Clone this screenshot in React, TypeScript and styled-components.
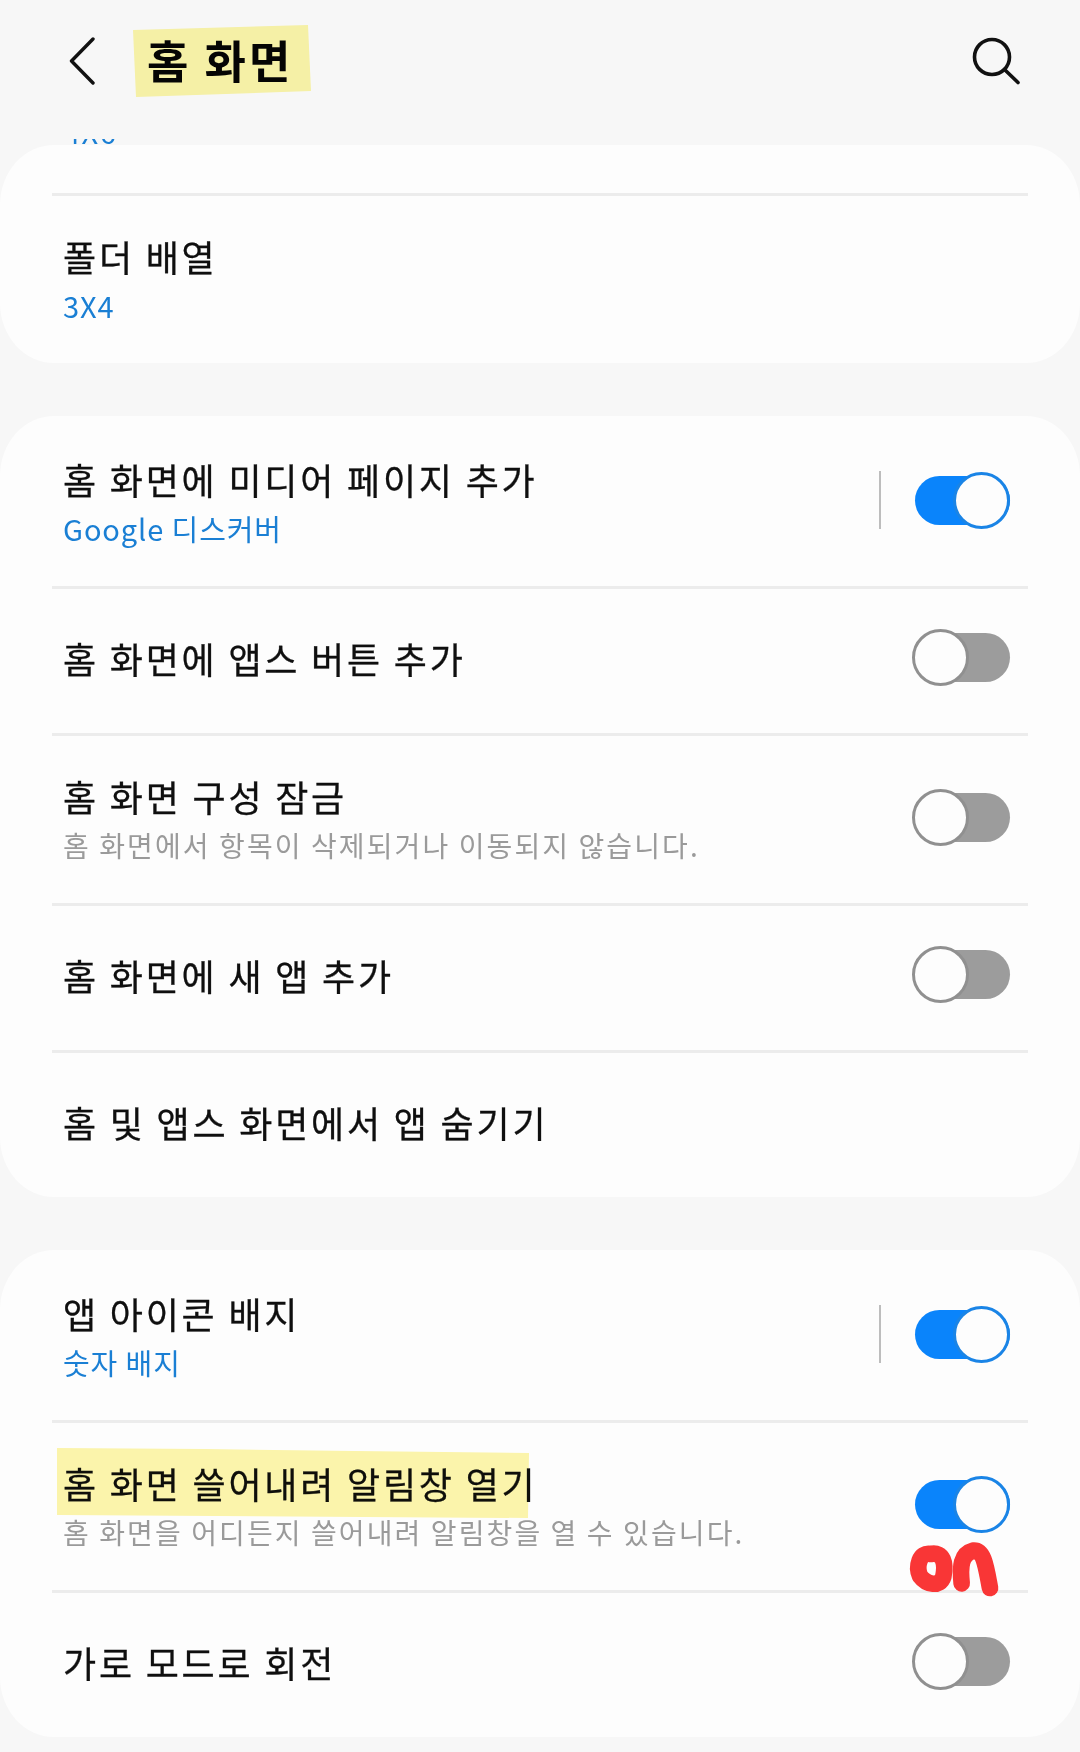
import React from "react";
import styled, { createGlobalStyle } from "styled-components";

const Global = createGlobalStyle`
  html, body { margin: 0; padding: 0; background: #f7f7f7; }
  body { width: 1080px; height: 1752px; overflow: hidden; font-family: "Noto Sans CJK KR", "Noto Sans", sans-serif; }
`;

const Page = styled.div`
  position: relative;
  width: 1080px;
  height: 1752px;
  overflow: hidden;
  background: #f7f7f7;
`;

const Header = styled.header`
  height: 139px;
  display: flex;
  align-items: flex-start;
  padding: 0 60px 0 69px;
  box-sizing: border-box;
`;

const IconButton = styled.div`
  margin-top: 37px;
  display: flex;
`;

const HeaderTitle = styled.h1`
  margin: 30px auto 0 52px;
  font-size: 45px;
  line-height: 60px;
  font-weight: 700;
  letter-spacing: 3px;
  color: #050505;
`;

const Clipped = styled.div`
  height: 6px;
  overflow: hidden;
  padding-left: 64px;
`;

const ClippedText = styled.div`
  margin-top: -27px;
  font-size: 29px;
  line-height: 38px;
  color: #1a7fd4;
  letter-spacing: 1.5px;
`;

const Card = styled.section`
  background: #fdfdfd;
  border-radius: 54px / 60px;
  padding-top: 3px;
  margin-bottom: 53px;
`;

const Spacer = styled.div`
  height: 45px;
  margin: 0 52px;
  border-bottom: 3px solid #ececec;
`;

const Row = styled.div<{ $tall: boolean; $last?: boolean }>`
  display: flex;
  align-items: center;
  box-sizing: border-box;
  height: ${(p) => (p.$tall ? 170 : 147) - (p.$last ? 3 : 0)}px;
  margin: 0 52px;
  padding: ${(p) => (p.$tall ? "0 0 5px 11px" : "0 0 7px 11px")};
  border-bottom: ${(p) => (p.$last ? "none" : "3px solid #ececec")};
`;

const Texts = styled.div<{ $tall: boolean }>`
  flex: 1;
  min-width: 0;
  padding-top: ${(p) => (p.$tall ? 5 : 0)}px;
`;

const Title = styled.div`
  font-size: 36px;
  line-height: 48px;
  letter-spacing: 2.8px;
  color: #0f0f0f;
  -webkit-text-stroke: 0.3px #0f0f0f;
`;

const Sub = styled.div<{ $blue?: boolean }>`
  margin-top: 2px;
  font-size: ${(p) => (p.$blue ? 29 : 28)}px;
  line-height: 46px;
  letter-spacing: ${(p) => (p.$blue ? "0.9px" : "2.1px")};
  color: ${(p) => (p.$blue ? "#1a7fd4" : "#9a9a9a")};
`;

const Separator = styled.div`
  width: 2px;
  height: 58px;
  background: #bdbdbd;
  margin-right: 34px;
`;

const SwitchTrack = styled.div<{ $on: boolean }>`
  position: relative;
  width: 95px;
  height: 49px;
  margin-right: 18px;
  border-radius: 25px;
  background: ${(p) => (p.$on ? "#0a84fb" : "#9c9c9c")};
`;

const SwitchThumb = styled.div<{ $on: boolean }>`
  position: absolute;
  top: -4px;
  ${(p) => (p.$on ? "right: 0;" : "left: -3px;")}
  width: 57px;
  height: 57px;
  box-sizing: border-box;
  border-radius: 50%;
  background: #fdfdfd;
  border: 3px solid ${(p) => (p.$on ? "#1a84e6" : "#909090")};
`;

const Marker = styled.svg<{ $x: number; $y: number }>`
  position: absolute;
  left: ${(p) => p.$x}px;
  top: ${(p) => p.$y}px;
  mix-blend-mode: multiply;
  pointer-events: none;
`;

const Scribble = styled.svg`
  position: absolute;
  left: 860px;
  top: 1450px;
  pointer-events: none;
`;

const Switch = ({ on }: { on: boolean }) => (
  <SwitchTrack $on={on}>
    <SwitchThumb $on={on} />
  </SwitchTrack>
);

type Item = { title: string; sub?: string; blue?: boolean; toggle?: boolean; sep?: boolean; last?: boolean };

const group2: Item[] = [
  { title: "홈 화면에 미디어 페이지 추가", sub: "Google 디스커버", blue: true, toggle: true, sep: true },
  { title: "홈 화면에 앱스 버튼 추가", toggle: false },
  { title: "홈 화면 구성 잠금", sub: "홈 화면에서 항목이 삭제되거나 이동되지 않습니다.", toggle: false },
  { title: "홈 화면에 새 앱 추가", toggle: false },
  { title: "홈 및 앱스 화면에서 앱 숨기기", last: true },
];

const group3: Item[] = [
  { title: "앱 아이콘 배지", sub: "숫자 배지", blue: true, toggle: true, sep: true },
  { title: "홈 화면 쓸어내려 알림창 열기", sub: "홈 화면을 어디든지 쓸어내려 알림창을 열 수 있습니다.", toggle: true },
  { title: "가로 모드로 회전", toggle: false, last: true },
];

const Rows = ({ items }: { items: Item[] }) => (
  <>
    {items.map((it) => (
      <Row key={it.title} $tall={!!it.sub} $last={it.last}>
        <Texts $tall={!!it.sub}>
          <Title>{it.title}</Title>
          {it.sub && <Sub $blue={it.blue}>{it.sub}</Sub>}
        </Texts>
        {it.sep && <Separator />}
        {it.toggle !== undefined && <Switch on={it.toggle} />}
      </Row>
    ))}
  </>
);

export default function App() {
  return (
    <Page>
      <Global />
      <Header>
        <IconButton>
          <svg width="26" height="48" viewBox="0 0 26 48" fill="none" stroke="#111" strokeWidth="3.4" strokeLinecap="round" strokeLinejoin="round">
            <path d="M24 2 L2.5 24 L24 46" />
          </svg>
        </IconButton>
        <HeaderTitle>홈 화면</HeaderTitle>
        <IconButton>
          <svg width="48" height="48" viewBox="0 0 48 48" fill="none" stroke="#111" strokeWidth="3.6" strokeLinecap="round">
            <circle cx="20" cy="20" r="17.5" />
            <path d="M32.5 32.5 L46 45.5" />
          </svg>
        </IconButton>
      </Header>
      <Clipped>
        <ClippedText>4X6</ClippedText>
      </Clipped>
      <Card>
        <Spacer />
        <Row $tall={true} $last={true}>
          <Texts $tall={true}>
            <Title>폴더 배열</Title>
            <Sub $blue>3X4</Sub>
          </Texts>
        </Row>
      </Card>
      <Card>
        <Rows items={group2} />
      </Card>
      <Card>
        <Rows items={group3} />
      </Card>

      <Marker $x={130} $y={22} width="185" height="80" viewBox="0 0 185 80">
        <polygon points="3,8 178,3 181,69 6,75" fill="#fdf8ac" />
      </Marker>
      <Marker $x={55} $y={1445} width="478" height="76" viewBox="0 0 478 76">
        <polygon points="2,3 150,4 300,6 474,8 473,73 2,70" fill="#fdf6ad" />
      </Marker>
      <Scribble width="220" height="180" viewBox="0 0 660 540" fill="none" stroke="#f93636" strokeWidth="50" strokeLinecap="round" strokeLinejoin="round">
        <path d="M212 312 C178 305 168 350 180 378 C200 405 240 412 250 380 C258 340 250 305 212 312 Z" />
        <path d="M305 400 C300 350 302 312 340 302 C372 300 378 350 390 414" />
      </Scribble>
    </Page>
  );
}
